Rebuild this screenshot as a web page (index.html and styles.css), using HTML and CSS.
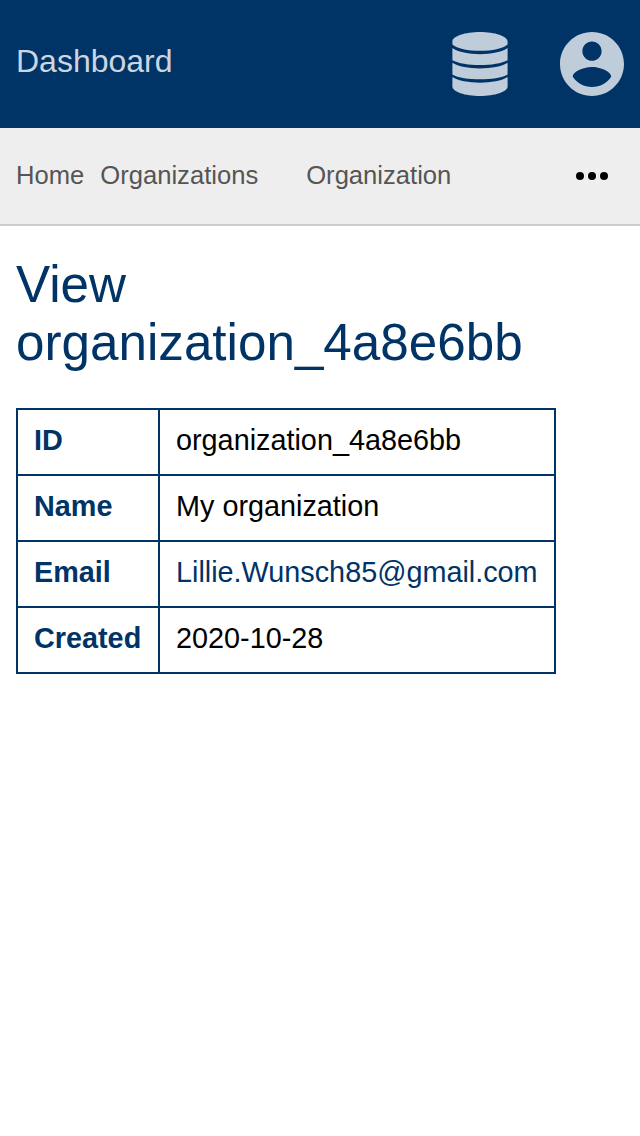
FILE: index.html
```html
<!DOCTYPE html>
<html lang="en">
<head>
<meta charset="utf-8">
<title>View organization_4a8e6bb</title>
<link rel="stylesheet" href="styles.css">
</head>
<body>
<header class="topbar">
  <a class="brand">Dashboard</a>
  <nav class="actions">
    <svg class="icon-db" viewBox="0 0 56 64"><path d="M28 0C13 0 .4 4.200.4 9.500V12.500C5 16.700 16 18.800 28 18.800S51 16.700 55.600 12.500V9.500C55.600 4.200 43 0 28 0zM.4 16C6 20 17 22.200 28 22.200S50 20 55.600 16V28.200C50 31.400 39 33 28 33S6 31.400.4 28.200zM.4 30.800C6 34.600 17 36.400 28 36.400S50 34.600 55.600 30.800V42.500C50 45.800 39 47.300 28 47.300S6 45.800.4 42.500zM.4 45.100C6 48.900 17 50.700 28 50.700S50 48.900 55.600 45.100V54.500C55.600 59.800 43 64 28 64S.4 59.800.4 54.500z"/></svg>
    <svg class="icon-user" viewBox="2 2 20 20"><path d="M12 2C6.480 2 2 6.480 2 12s4.480 10 10 10 10-4.480 10-10S17.520 2 12 2zm0 3c1.660 0 3 1.340 3 3s-1.340 3-3 3-3-1.340-3-3 1.340-3 3-3zm0 14.200c-2.500 0-4.710-1.280-6-3.220.030-1.990 4-3.080 6-3.080 1.990 0 5.970 1.090 6 3.080-1.290 1.940-3.500 3.220-6 3.220z"/></svg>
  </nav>
</header>
<nav class="crumbs">
  <a class="crumb-home">Home</a>
  <a class="crumb-list">Organizations</a>
  <a class="crumb-item">Organization</a>
  <svg class="more" viewBox="0 0 32 8"><circle cx="4" cy="4" r="4"/><circle cx="16" cy="4" r="4"/><circle cx="28" cy="4" r="4"/></svg>
</nav>
<main class="content">
  <h1 class="title">View<br>organization_4a8e6bb</h1>
  <table class="details">
    <tr><th>ID</th><td>organization_4a8e6bb</td></tr>
    <tr><th>Name</th><td>My organization</td></tr>
    <tr><th>Email</th><td><a class="mail">Lillie.Wunsch85@gmail.com</a></td></tr>
    <tr><th>Created</th><td>2020-10-28</td></tr>
  </table>
</main>
</body>
</html>
```
FILE: styles.css
```css
* { box-sizing: border-box; }
body { margin: 0; background: #fff; color: #000; font-family: "Liberation Sans", Arial, sans-serif; }
.topbar { display: flex; justify-content: space-between; align-items: center; height: 128px; padding: 0 16px; background: #003366; color: #ccd6e0; }
.brand { font-size: 32px; line-height: 40px; padding-bottom: 6px; }
.actions { display: flex; align-items: center; gap: 52px; }
.actions svg { fill: #bfccd9; height: 64px; }
.icon-db { width: 56px; }
.icon-user { width: 64px; }
.crumbs { display: flex; align-items: center; height: 98px; padding: 0 32px 0 16px; background: #eee; border-bottom: 2px solid #ccc; color: #555; font-size: 25.6px; line-height: 30px; }
.crumbs a { padding-bottom: 2px; }
.crumb-list { margin-left: 16px; }
.crumb-item { margin-left: 48px; }
.more { width: 32px; height: 8px; margin-left: auto; }
.content { padding: 30px 16px; }
.title { margin: 0 0 36px; font-size: 51.2px; line-height: 58px; font-weight: 400; color: #003366; }
.details { border-collapse: collapse; font-size: 28.8px; line-height: 32px; }
.details th, .details td { border: 2px solid #003366; padding: 14px 16px 18px; height: 66px; text-align: left; }
.details th { width: 142px; color: #003366; }
.mail { color: #003366; }
```
